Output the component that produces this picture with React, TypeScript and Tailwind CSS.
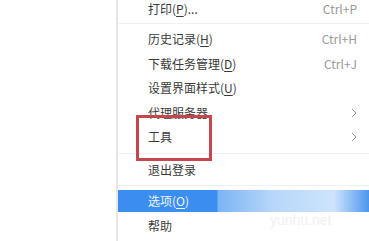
import React from "react";

type Item = {
  label: string;
  key?: string;
  suffix?: string;
  shortcut?: string;
  submenu?: boolean;
  h: string;
  active?: boolean;
};

const Chevron = () => (
  <svg width="6" height="10" viewBox="0 0 6 10" className="text-[#9a9a9a]">
    <path d="M1 1l4 4-4 4" fill="none" stroke="currentColor" strokeWidth="1" />
  </svg>
);

function Row({ item }: { item: Item }) {
  return (
    <div
      className={`flex items-center justify-between pl-[30px] pr-[12px] ${item.h} ${
        item.active
          ? "bg-[linear-gradient(to_right,#3b8ef0_0px,#3b8ef0_99px,#7ab4f4_100px,#b8d7fa_62%,#cde4fc_86%,#4c96ef_100%)] text-[#eef5ff]"
          : "text-[#3a3a3a]"
      }`}
    >
      <span>
        {item.label}
        {item.key && (
          <>
            (<span className="underline underline-offset-2">{item.key}</span>)
          </>
        )}
        {item.suffix}
      </span>
      {item.shortcut && <span className="text-[#999999] text-[12px]">{item.shortcut}</span>}
      {item.submenu && <Chevron />}
    </div>
  );
}

const Sep = ({ h, mt }: { h: string; mt: string }) => (
  <div className={`${h} ${mt}`}>
    <div className="h-px bg-[#f0f0f0]" />
  </div>
);

export default function App() {
  return (
    <div
      className="relative flex h-[241px] w-[369px] overflow-hidden bg-white text-[12px]"
      style={{ fontFamily: '"Noto Sans CJK SC", "Noto Sans", sans-serif' }}
    >
      <div className="w-[116px] shrink-0 bg-white" />
      <div className="flex-1 border-l-2 border-[#e6e6e6] leading-none">
        <Row item={{ label: "打印", key: "P", suffix: "...", shortcut: "Ctrl+P", h: "h-[17px]" }} />
        <Sep h="h-[10px]" mt="pt-[6px]" />
        <Row item={{ label: "历史记录", key: "H", shortcut: "Ctrl+H", h: "h-[24.5px]" }} />
        <Row item={{ label: "下载任务管理", key: "D", shortcut: "Ctrl+J", h: "h-[24.5px]" }} />
        <Row item={{ label: "设置界面样式", key: "U", h: "h-[24.5px]" }} />
        <Row item={{ label: "代理服务器", submenu: true, h: "h-[24.5px]" }} />
        <Row item={{ label: "工具", submenu: true, h: "h-[24.5px]" }} />
        <Sep h="h-[8.25px]" mt="pt-[3px]" />
        <Row item={{ label: "退出登录", h: "h-[24.5px]" }} />
        <Sep h="h-[7.75px]" mt="pt-[3px]" />
        <Row item={{ label: "选项", key: "O", active: true, h: "h-[22px]" }} />
        <Row item={{ label: "帮助", h: "h-[28px]" }} />
      </div>

      <div className="absolute left-[136px] top-[115px] h-[46px] w-[76px] border-[3px] border-[#c4474d]" />
      <div
        className="absolute left-[270px] top-[210px] text-[14px] text-[#f0f0f0]"
        style={{ fontFamily: '"Liberation Sans", sans-serif' }}
      >
        yunhu.net
      </div>
    </div>
  );
}
